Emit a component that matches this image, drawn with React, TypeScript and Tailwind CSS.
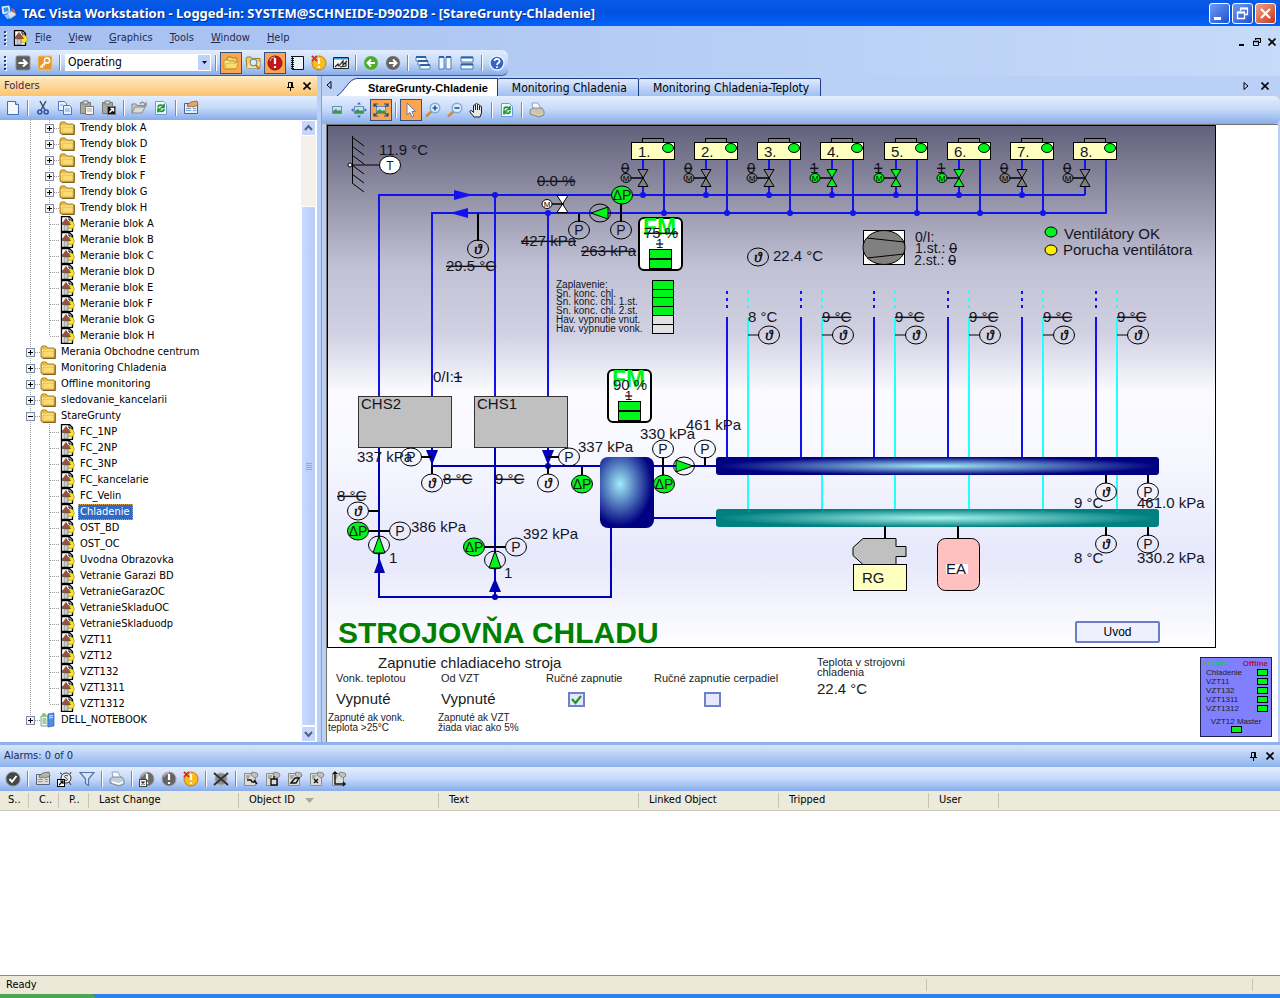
import type { ReactNode } from "react"

const ui = "font-['DejaVu_Sans_Condensed','DejaVu_Sans',sans-serif]"
const barBg = "bg-linear-to-b from-[#e3edfd] via-[#c5d9f9] to-[#88acea]"

/* ---------- icons ---------- */

function Icon({ children }: { children: ReactNode }) {
  return (
    <svg width="16" height="16" viewBox="0 0 16 16" fill="none" aria-hidden="true" className="shrink-0">
      {children}
    </svg>
  )
}

const FolderIcon = () => (
  <Icon>
    <path d="M1 4l1-2h4l2 2h6l1 1v8l-1 1H2l-1-1z" fill="#e8bc45" stroke="#a9812a" />
    <path d="M2 5.5h12V12H2z" fill="#fff1a0" />
    <path d="M3 7h11v6H3z" fill="#fbdc74" stroke="#d6a73a" strokeWidth=".7" />
    <path d="M15.3 5v9.5H3" stroke="#7d5d1e" />
  </Icon>
)

const GraphicIcon = () => (
  <Icon>
    <path d="M2.5 .5h8l3 3v12h-11z" fill="#fff" stroke="#000" strokeWidth="1.3" />
    <path d="M10 1v3h3.5" stroke="#000" />
    <circle cx="11.5" cy="9" r="3.8" fill="#f5e52a" stroke="#a89a10" strokeWidth=".7" />
    <path d="M7 2.5l4.5 6h-9z" fill="#a2503f" stroke="#5c2419" strokeWidth=".6" />
    <path d="M5 9h4v5.500H5z" fill="#c8cdd2" stroke="#5b6067" strokeWidth=".6" />
  </Icon>
)

const ComputerIcon = () => (
  <Icon>
    <path d="M1 4h7v10H1z" fill="#eef3ee" stroke="#8a9aa8" />
    <path d="M8 2l6-1v13l-6 1z" fill="#4d8fe0" stroke="#2b5ea8" strokeWidth=".7" />
    <path d="M2.5 7h4M2.5 9h4M2.5 11h4" stroke="#58a858" />
    <path d="M9 4l4-.6M9 6l4-.6" stroke="#cfe4ff" />
    <circle cx="4" cy="3" r="2" fill="#7bd048" />
  </Icon>
)

const AppIcon = () => (
  <Icon>
    <path d="M1 2l7-1 1 6-7 2z" fill="#bfe2ff" stroke="#e8f4ff" />
    <path d="M2.500 3l4.500-.7.700 3.800-4.500 1z" fill="#3590e8" />
    <path d="M6 8l7-3 2 5-6 4z" fill="#d7e3ee" stroke="#7b93b5" strokeWidth=".7" />
    <path d="M10 3l3 1 1 4-3-1z" fill="#c4604c" />
    <path d="M3 10l4-1 3 4-4 1z" fill="#8cc4f4" />
  </Icon>
)

const GoIcon = () => (
  <Icon>
    <rect x="1" y="1" width="14" height="14" rx="1.5" fill="#5b5e5f" stroke="#8b8e90" />
    <path d="M3.5 8h8M8 4.5L11.8 8 8 11.5" stroke="#fff" strokeWidth="2" />
  </Icon>
)

const KeyIcon = () => (
  <Icon>
    <rect x="1" y="1" width="14" height="14" rx="1.5" fill="#e6962a" stroke="#f6c26d" />
    <circle cx="10" cy="5.5" r="2.6" stroke="#fff" strokeWidth="1.5" />
    <path d="M8 7.5l-5 5M4.5 11l1.7 1.7M6.5 9l1.5 1.5" stroke="#fff" strokeWidth="1.5" />
  </Icon>
)

const FoldersIcon = () => (
  <Icon>
    <path d="M4 3l1-1h3l1 1h5v8H4z" fill="#f7d767" stroke="#a67f1d" />
    <path d="M1 6l1-1h3l1 1h6l1.5 8H1z" fill="#fff0a0" stroke="#b88d25" />
    <path d="M3 8h10l2-1-1.5 6.5H2z" fill="#fbdc6c" stroke="#c09428" strokeWidth=".6" />
  </Icon>
)

const FolderSearchIcon = () => (
  <Icon>
    <path d="M1 4l1-2h4l1 1.5h8V13H2z" fill="#f4cd5b" stroke="#a67f1d" />
    <path d="M2 13l2-6h11l-1 6z" fill="#fde891" />
    <circle cx="8.5" cy="7.5" r="3.3" fill="#d9efff" stroke="#7b8d9c" strokeWidth="1.2" />
    <path d="M11 10l3 4" stroke="#b57b1b" strokeWidth="2" />
  </Icon>
)

function Alert({ fill, ring = "#777", mark = "#fff" }: { fill: string; ring?: string; mark?: string }) {
  return (
    <>
      <circle cx="8" cy="8" r="7" fill={fill} stroke={ring} />
      <path d="M3 6a5.5 5 0 0 1 5-4" stroke="#fff" opacity=".5" strokeWidth="1.3" />
      <path d="M8 3v6M8 11v2" stroke={mark} strokeWidth="2.2" />
    </>
  )
}

const RedAlertIcon = () => (
  <Icon>
    <Alert fill="#c51717" ring="#7f1515" />
  </Icon>
)
const GrayAlertIcon = () => (
  <Icon>
    <Alert fill="#646464" ring="#a0a0a0" />
  </Icon>
)
const OffAlertIcon = () => (
  <Icon>
    <Alert fill="#6a6a6a" ring="#a0a0a0" />
    <rect x=".5" y="8.5" width="7" height="7" fill="#f4f4f4" stroke="#444" />
    <path d="M2.5 10.500l3 3M5.500 10.500l-3 3" stroke="#222" strokeWidth="1.2" />
  </Icon>
)
const YellowAlertIcon = () => (
  <Icon>
    <Alert fill="#f6bd1c" ring="#c77a12" mark="#fff7d8" />
    <path d="M1 1l5 5M6 1L1 6" stroke="#e0301a" strokeWidth="2" />
  </Icon>
)

const NotebookIcon = () => (
  <Icon>
    <path d="M3.5 1.5h11v13h-11z" fill="#eaf2fc" stroke="#111" />
    <path d="M3.5 1v14" stroke="#111" strokeWidth="3" strokeDasharray="1 1" />
  </Icon>
)

const TrendIcon = () => (
  <Icon>
    <path d="M.5 2.5h15v11H.5z" fill="#f4f6ee" stroke="#222" />
    <path d="M1 3h14v1.5H1z" fill="#3a9ae0" />
    <path d="M2 12l3-3 1 2 4-5v4l4-4M7 12l6-1V8" stroke="#222" strokeWidth="1.2" />
  </Icon>
)

function RoundArrow({ fill, back }: { fill: string; back?: boolean }) {
  return (
    <Icon>
      <circle cx="8" cy="8" r="7.3" fill={fill} stroke="#e4ede4" strokeWidth=".5" />
      <path d={back ? "M12 8H5M8 4.5L4.5 8 8 11.5" : "M4 8h7M8 4.5L11.5 8 8 11.5"} stroke="#fff" strokeWidth="1.9" />
    </Icon>
  )
}

const CascadeIcon = () => (
  <Icon>
    <path d="M1 2h10v4H1zM3 6h10v4H3zM5 10h10v4H5z" fill="#f2f8ff" stroke="#2b62a8" strokeWidth=".7" />
    <path d="M1 2h10M3 6h10M5 10h10" stroke="#2b62a8" strokeWidth="2" />
  </Icon>
)
const TileVIcon = () => (
  <Icon>
    <path d="M2 2h5v12H2zM9 2h5v12H9z" fill="#f2f8ff" stroke="#2b62a8" strokeWidth=".8" />
    <path d="M2 2h5M9 2h5" stroke="#2b62a8" strokeWidth="2" />
  </Icon>
)
const TileHIcon = () => (
  <Icon>
    <path d="M2 2h12v5H2zM2 9h12v5H2z" fill="#f2f8ff" stroke="#2b62a8" strokeWidth=".8" />
    <path d="M2 2.5h12M2 9.5h12" stroke="#2b62a8" strokeWidth="2" />
  </Icon>
)

const HelpIcon = () => (
  <Icon>
    <circle cx="8" cy="8" r="7" fill="#3466c8" stroke="#eef4ff" strokeWidth="1.3" />
    <path d="M5.5 6a2.5 2.3 0 1 1 3.5 2.2c-.9.5-1 .8-1 1.8M8 11.3v1.7" stroke="#fff" strokeWidth="1.7" />
  </Icon>
)

const NewIcon = () => (
  <Icon>
    <path d="M2.5 1.5h8l3 3v10h-11z" fill="#f3f8ff" stroke="#456fb5" />
    <path d="M10.5 1.5v3h3" fill="#cfe0f8" stroke="#456fb5" />
  </Icon>
)
const CutIcon = () => (
  <Icon>
    <path d="M5 1l5 9M11 1L6 10" stroke="#3d4e68" strokeWidth="1.5" />
    <circle cx="4.8" cy="12" r="2" stroke="#2d57a4" strokeWidth="1.6" />
    <circle cx="11.2" cy="12" r="2" stroke="#2d57a4" strokeWidth="1.6" />
  </Icon>
)
const CopyIcon = () => (
  <Icon>
    <path d="M1.5 1.5h6l2 2v7h-8z" fill="#eaf2ff" stroke="#4a77bd" />
    <path d="M6.5 5.5h6l2 2v7h-8z" fill="#eaf2ff" stroke="#4a77bd" />
    <path d="M3 5h3M8 9h5M8 11h5" stroke="#7ea2da" />
  </Icon>
)
const PasteIcon = ({ link }: { link?: boolean }) => (
  <Icon>
    <path d="M1.5 2.5h10v11h-10z" fill="#a9a9a4" stroke="#777" />
    <path d="M4 1h5v3H4z" fill="#ddd" stroke="#777" />
    <path d="M6.5 6.5h8v8h-8z" fill={link ? "#111" : "#f5f5f2"} stroke="#777" />
    {link ? <path d="M8.5 12.5l4-4M9.500 8.5h3v3" stroke="#fff" strokeWidth="1.5" /> : <path d="M8 9h5M8 11h5" stroke="#aaa" />}
  </Icon>
)
const OpenIcon = () => (
  <Icon>
    <path d="M1 13V4h4l1 1.5h5V8" fill="#c9c9c4" stroke="#8b8b86" />
    <path d="M1 13l3-6h10l-3 6z" fill="#dcdcd6" stroke="#8b8b86" />
    <path d="M9 4c2-3 4-2 5 1M15 2v4h-4" stroke="#8b8b86" strokeWidth="1.3" />
  </Icon>
)
const RefreshIcon = () => (
  <Icon>
    <path d="M2.5 1.5h8l3 3v10h-11z" fill="#f0f7ff" stroke="#6f99d2" />
    <path d="M5 7.5c0-3 4-3 5.5-1M11 4v3.500H7.5" stroke="#1c9a2c" strokeWidth="1.7" />
    <path d="M11 9c0 3-4 3-5.5 1M5 12.500V9h3.5" stroke="#1c9a2c" strokeWidth="1.7" />
  </Icon>
)
const PropsIcon = ({ gray }: { gray?: boolean }) => (
  <Icon>
    <path d="M1.5 3.5h13v10h-13z" fill={gray ? "#deded8" : "#e3edfb"} stroke="#54647c" />
    <path d="M3 8.500h5M3 10.500h5M10 8.500h3M10 10.500h3" stroke={gray ? "#999" : "#7fa0d4"} />
    <path d="M4 5l4-3 6-1 1 4-5 2-2-1-3 1z" fill={gray ? "#b9b4aa" : "#e2a86a"} stroke={gray ? "#66635d" : "#8f5b2b"} strokeWidth=".8" />
  </Icon>
)

const Picture = () => (
  <>
    <rect x="3.5" y="4.5" width="9" height="7" fill="#bfe0f5" stroke="#6d8db4" />
    <path d="M4 11V9l3-2 2 2 2-1 1 1v2z" fill="#3f9445" />
  </>
)
const PictureIcon = () => (
  <Icon>
    <Picture />
  </Icon>
)
const PictureFitIcon = () => (
  <Icon>
    <Picture />
    <path d="M8 0l2 2.5H6zM8 16l2-2.5H6zM0 8l2.5-2v4zM16 8l-2.5-2v4z" fill="#2f6fc0" />
  </Icon>
)
const PictureFullIcon = () => (
  <Icon>
    <Picture />
    <path d="M1 5V2h4M11 2h4v3M15 11v3h-4M5 14H1v-3M1 2l3 3M15 2l-3 3M15 14l-3-3M1 14l3-3" stroke="#1d4f8c" strokeWidth="1.2" />
  </Icon>
)
const PointerIcon = () => (
  <Icon>
    <path d="M4 1l8.5 8.5H9l2 4.5-2 1-2-4.5L4 13z" fill="#f4f8ff" stroke="#6c80a0" />
  </Icon>
)
const ZoomIcon = ({ plus }: { plus?: boolean }) => (
  <Icon>
    <path d="M6.5 9.500L1 14.5" stroke="#cf8b3a" strokeWidth="2.5" />
    <circle cx="10" cy="6" r="4.8" fill="#d7edff" stroke="#8aa9cf" strokeWidth="1.4" />
    <path d={plus ? "M7.5 6h5M10 3.5v5" : "M7.5 6h5"} stroke="#1d5fae" strokeWidth="1.7" />
  </Icon>
)
const HandIcon = () => (
  <Icon>
    <path d="M5 15l-4-5c-.5-1.5 1-2 2-1l1.5 1.5V4c0-1.500 2-1.500 2 0V2.500c0-1.500 2-1.500 2 0v1c0-1.500 2-1.500 2 0v1.500c0-1.500 2-1.500 2 0V11l-1.5 4z" fill="#e8e8e8" stroke="#222" />
    <path d="M6.5 4v4M8.5 3.5V8M10.5 4v4" stroke="#222" />
  </Icon>
)
const PrinterIcon = ({ gray }: { gray?: boolean }) => (
  <Icon>
    <path d="M4 7L3 1h6l3 6z" fill="#f6fbff" stroke="#89a5c6" />
    <path d="M1 8l3-2h9l2 3v4l-5 2-9-3z" fill={gray ? "#c2cedd" : "#c6c4bd"} stroke="#75777b" strokeWidth=".8" />
    <path d="M3 11l7 2 4-2" stroke={gray ? "#fff" : "#e0d18c"} strokeWidth="1.5" />
  </Icon>
)
const AckIcon = () => (
  <Icon>
    <circle cx="8" cy="8" r="7" fill="#454545" stroke="#888" />
    <path d="M4.5 8l2.5 2.8L11.5 5" stroke="#fff" strokeWidth="2" />
  </Icon>
)
const FindIcon = () => (
  <Icon>
    <circle cx="9" cy="7" r="5" fill="#ececec" stroke="#333" />
    <path d="M11 5c-3-1.5-5 .5-2 2s1 3.3-2 2M3 2l2 1M14 1l-1 2M12 11l2 3" stroke="#333" />
    <rect x=".5" y="8.5" width="7" height="7" fill="#fff" stroke="#000" />
    <path d="M2 14l4-4M3 10h3v3" stroke="#000" strokeWidth="1.2" />
  </Icon>
)
const FilterIcon = () => (
  <Icon>
    <path d="M1 1.5h14L9.5 8v6.500l-3-2V8z" fill="#d5e6fb" stroke="#54749f" strokeWidth="1.2" />
  </Icon>
)
const CrossedIcon = () => (
  <Icon>
    <circle cx="8" cy="8" r="6" fill="#8c8c8c" stroke="#aaa" />
    <path d="M1 2l14 12M15 2L1 14" stroke="#333" strokeWidth="2" />
  </Icon>
)
const SheetIcon = ({ mark }: { mark: string }) => (
  <Icon>
    <path d="M1.5 2.5h11v12h-11z" fill="#dcdcd8" stroke="#8a8a86" />
    <path d="M9 1l5 1 1 3-3 2-4-3z" fill="#c4c2ba" stroke="#77756f" strokeWidth=".8" />
    <path d="M3 5h4M3 7h3" stroke="#777" />
    <path d={mark} stroke="#111" strokeWidth="1.4" />
  </Icon>
)

const PinIcon = () => (
  <svg width="8" height="9" viewBox="0 0 8 9" fill="none" stroke="#000" aria-hidden="true">
    <path d="M1.5 .5h4v5h-4zM4.5 .5v5M0 5.5h7M3.5 6v3" />
  </svg>
)
const CloseIcon = () => (
  <svg width="8" height="8" viewBox="0 0 8 8" fill="none" stroke="#000" strokeWidth="1.6" aria-hidden="true">
    <path d="M.5 .5l7 7M7.5 .5l-7 7" />
  </svg>
)

/* ---------- toolbars ---------- */

function Tool({ label, active, children }: { label: string; active?: boolean; children: ReactNode }) {
  return (
    <button
      type="button"
      aria-label={label}
      className={`flex h-[22px] w-[22px] shrink-0 items-center justify-center ${active ? "border border-[#3a4f86] bg-[#fba550]" : ""}`}
    >
      {children}
    </button>
  )
}

function Sep() {
  return (
    <span className="flex h-4 w-2 shrink-0 justify-center">
      <span className="w-px bg-[#6a8ccb]" />
      <span className="w-px bg-white" />
    </span>
  )
}

function Grip() {
  return (
    <svg width="4" height="16" viewBox="0 0 4 16" className="mx-1 shrink-0" aria-hidden="true">
      {[1, 5, 9, 13].map((y) => (
        <g key={y}>
          <rect x="1" y={y + 1} width="2" height="2" fill="#fff" />
          <rect x="0" y={y} width="2" height="2" fill="#27417d" />
        </g>
      ))}
    </svg>
  )
}

function PanelButtons() {
  return (
    <div className="flex items-center gap-2">
      <button type="button" aria-label="Auto hide">
        <PinIcon />
      </button>
      <button type="button" aria-label="Close panel">
        <CloseIcon />
      </button>
    </div>
  )
}

function TitleBar() {
  return (
    <header className="flex h-[26px] items-center justify-between bg-linear-to-b from-[#0a5be8] via-[#0053e1] to-[#0263ff] pr-1 pl-px">
      <div className="flex items-center gap-[5px]">
        <AppIcon />
        <h1 className="font-['Noto_Sans',sans-serif] text-[13px] font-bold whitespace-nowrap text-white [text-shadow:1px_1px_#0a2a80]">
          TAC Vista Workstation - Logged-in: SYSTEM@SCHNEIDE-D902DB - [StareGrunty-Chladenie]
        </h1>
      </div>
      <div className="flex gap-[2px]">
        <button type="button" aria-label="Minimize" className="h-[21px] w-[21px] rounded-[3px] border border-white bg-linear-to-br from-[#6f9bf5] to-[#1f4fd0]">
          <svg viewBox="0 0 19 19" aria-hidden="true"><path d="M4 13h7v3H4z" fill="#fff" /></svg>
        </button>
        <button type="button" aria-label="Restore" className="h-[21px] w-[21px] rounded-[3px] border border-white bg-linear-to-br from-[#6f9bf5] to-[#1f4fd0]">
          <svg viewBox="0 0 19 19" fill="none" stroke="#fff" aria-hidden="true">
            <path d="M7.5 7V4.5h7v6H12" strokeWidth="1.3" />
            <path d="M7 4.5h8M4 8.5h8" strokeWidth="2" />
            <path d="M4.5 8.5h7v6h-7z" strokeWidth="1.3" />
          </svg>
        </button>
        <button type="button" aria-label="Close" className="h-[21px] w-[21px] rounded-[3px] border border-white bg-linear-to-br from-[#f0a088] to-[#c83210]">
          <svg viewBox="0 0 19 19" stroke="#fff" strokeWidth="2.2" aria-hidden="true"><path d="M5 5l9 9M14 5l-9 9" /></svg>
        </button>
      </div>
    </header>
  )
}

const menus = ["File", "View", "Graphics", "Tools", "Window", "Help"]

function MenuBar() {
  return (
    <nav className="flex h-6 items-center justify-between pr-1">
      <div className="flex items-center">
        <Grip />
        <GraphicIcon />
        <div className="ml-[7px] flex gap-[17px]">
          {menus.map((m) => (
            <button key={m} type="button" className="text-[#1c2a52]">
              <span className="underline">{m[0]}</span>
              {m.slice(1)}
            </button>
          ))}
        </div>
      </div>
      <div className="flex items-center gap-[7px] pt-2">
        <button type="button" aria-label="Minimize document">
          <svg width="8" height="8" viewBox="0 0 8 8" aria-hidden="true"><path d="M1 6h5v2H1z" /></svg>
        </button>
        <button type="button" aria-label="Restore document">
          <svg width="8" height="8" viewBox="0 0 8 8" fill="none" stroke="#000" aria-hidden="true">
            <path d="M2.5 2V.5h5v4H6M.5 3.5h5v4h-5z" />
            <path d="M2 .5h6M0 3.5h6" strokeWidth="1.5" />
          </svg>
        </button>
        <button type="button" aria-label="Close document">
          <CloseIcon />
        </button>
      </div>
    </nav>
  )
}

function MainToolbar() {
  return (
    <div className={`flex h-[26px] w-fit items-center rounded-r-md border-b border-[#3d5f9f] ${barBg}`}>
      <Grip />
      <Tool label="Log off"><GoIcon /></Tool>
      <Tool label="Access"><KeyIcon /></Tool>
      <Sep />
      <span className="relative mx-px flex">
        <select aria-label="Mode" className="h-[17px] w-[146px] appearance-none bg-white pl-[3px] text-[12px] leading-[17px]" defaultValue="Operating">
          <option>Operating</option>
        </select>
        <span className="pointer-events-none absolute top-px right-px flex h-[15px] w-3 items-center justify-center bg-[#bcd2f8]">
          <svg width="5" height="3" viewBox="0 0 5 3" aria-hidden="true"><path d="M0 0h5L2.5 3z" /></svg>
        </span>
      </span>
      <Sep />
      <Tool label="Folders" active><FoldersIcon /></Tool>
      <Tool label="Search folders"><FolderSearchIcon /></Tool>
      <Tool label="Alarms" active><RedAlertIcon /></Tool>
      <Tool label="Log"><NotebookIcon /></Tool>
      <Tool label="Disabled alarms"><YellowAlertIcon /></Tool>
      <Tool label="Trends"><TrendIcon /></Tool>
      <Sep />
      <Tool label="Back"><RoundArrow fill="#4cae30" back /></Tool>
      <Tool label="Forward"><RoundArrow fill="#666" /></Tool>
      <Sep />
      <Tool label="Cascade"><CascadeIcon /></Tool>
      <Tool label="Tile vertically"><TileVIcon /></Tool>
      <Tool label="Tile horizontally"><TileHIcon /></Tool>
      <Sep />
      <Tool label="Help"><HelpIcon /></Tool>
    </div>
  )
}

/* ---------- folder tree ---------- */

type Node = { name: string; level: 1 | 2; kind: "folder" | "page" | "host"; box?: "+" | "-"; last?: boolean }

const page = (name: string): Node => ({ name, level: 2, kind: "page" })

const nodes: Node[] = [
  ...["A", "D", "E", "F", "G", "H"].map((s): Node => ({ name: `Trendy blok ${s}`, level: 2, kind: "folder", box: "+" })),
  ...["A", "B", "C", "D", "E", "F", "G"].map((s) => page(`Meranie blok ${s}`)),
  { ...page("Meranie blok H"), last: true },
  { name: "Merania Obchodne centrum", level: 1, kind: "folder", box: "+" },
  { name: "Monitoring Chladenia", level: 1, kind: "folder", box: "+" },
  { name: "Offline monitoring", level: 1, kind: "folder", box: "+" },
  { name: "sledovanie_kancelarii", level: 1, kind: "folder", box: "+" },
  { name: "StareGrunty", level: 1, kind: "folder", box: "-" },
  ...["FC_1NP", "FC_2NP", "FC_3NP", "FC_kancelarie", "FC_Velin", "Chladenie", "OST_BD", "OST_OC", "Uvodna Obrazovka"].map(page),
  ...["Vetranie Garazi BD", "VetranieGarazOC", "VetranieSkladuOC", "VetranieSkladuodp", "VZT11", "VZT12", "VZT132", "VZT1311"].map(page),
  { ...page("VZT1312"), last: true },
  { name: "DELL_NOTEBOOK", level: 1, kind: "host", box: "+", last: true },
]

function Connector({ box, branch, last }: { box?: "+" | "-"; branch?: boolean; last?: boolean }) {
  return (
    <svg width="20" height="16" viewBox="0 0 20 16" className="-mr-px shrink-0" shapeRendering="crispEdges" aria-hidden="true">
      <path d={last ? "M9.5 0v8" : "M9.5 0v16"} stroke="#9a9a9a" strokeDasharray="1 1" />
      {branch && <path d="M10 8.5h10" stroke="#9a9a9a" strokeDasharray="1 1" />}
      {box && (
        <>
          <rect x="5.5" y="4.5" width="8" height="8" fill="#f4f3ee" stroke="#7b8ba5" />
          <path d={box === "+" ? "M7 8.5h5M9.5 6v5" : "M7 8.5h5"} stroke="#000" />
        </>
      )}
    </svg>
  )
}

function TreeRow({ node }: { node: Node }) {
  const selected = node.name === "Chladenie"
  return (
    <li className="flex h-4 items-center pl-[21px]">
      {node.level === 2 && <Connector />}
      <Connector box={node.box} branch last={node.last} />
      {node.kind === "folder" && <FolderIcon />}
      {node.kind === "page" && <GraphicIcon />}
      {node.kind === "host" && <ComputerIcon />}
      <button
        type="button"
        className={`ml-[3px] h-4 pr-[3px] pl-[2px] leading-4 whitespace-nowrap ${selected ? "bg-[#316ac5] text-white outline-1 -outline-offset-1 outline-dotted outline-[#e0a050]" : ""}`}
      >
        {node.name}
      </button>
    </li>
  )
}

function ScrollButton({ label, d }: { label: string; d: string }) {
  return (
    <button type="button" aria-label={label} className="h-4 w-[15px] rounded-[2px] border border-white bg-[#c6d5fb]">
      <svg viewBox="0 0 13 14" fill="none" stroke="#4d6185" strokeWidth="2" aria-hidden="true"><path d={d} /></svg>
    </button>
  )
}

function FoldersPanel() {
  return (
    <aside className="flex w-[317px] shrink-0 flex-col">
      <div className="flex h-5 items-center justify-between bg-linear-to-b from-[#ffebc4] to-[#fdc36c] pr-[6px] pl-1 text-[#3a2a4a]">
        <h2>Folders</h2>
        <PanelButtons />
      </div>
      <div className={`flex h-6 items-center pl-[2px] ${barBg}`}>
        <Tool label="New"><NewIcon /></Tool>
        <Sep />
        <Tool label="Cut"><CutIcon /></Tool>
        <Tool label="Copy"><CopyIcon /></Tool>
        <Tool label="Paste"><PasteIcon /></Tool>
        <Tool label="Paste shortcut"><PasteIcon link /></Tool>
        <Sep />
        <Tool label="Open"><OpenIcon /></Tool>
        <Tool label="Refresh"><RefreshIcon /></Tool>
        <Sep />
        <Tool label="Properties"><PropsIcon /></Tool>
      </div>
      <div className="flex flex-1 bg-white">
        <ul className="flex-1 pb-[14px]">
          {nodes.map((n) => (
            <TreeRow key={n.name} node={n} />
          ))}
        </ul>
        <div className="mr-px flex w-[15px] flex-col bg-[#f3f1ea]">
          <ScrollButton label="Scroll up" d="M3 9l3.5-4L10 9" />
          <div className="h-[70px]" />
          <div className="flex w-[15px] flex-1 flex-col items-center justify-center gap-px rounded-[2px] border border-white bg-linear-to-r from-[#cad9fd] to-[#b7cbf8]">
            {[0, 1, 2, 3].map((i) => (
              <span key={i} className="h-px w-[6px] bg-[#8ba7e6]" />
            ))}
          </div>
          <ScrollButton label="Scroll down" d="M3 5l3.5 4L10 5" />
        </div>
      </div>
    </aside>
  )
}

/* ---------- process diagram ---------- */

const BLUE = "#1212ee"
const NAVY = "#0000b8"
const CYAN = "#22ffff"
const GREEN = "#00f51a"

type TextProps = { x: number; y: number; children: ReactNode; struck?: boolean; size?: number }

function T({ x, y, children, struck, size = 15 }: TextProps) {
  return (
    <text x={x} y={y} fontSize={size} fill="#14141e" textDecoration={struck ? "line-through" : undefined}>
      {children}
    </text>
  )
}

function Gauge({ x, y, kind, fill = "none" }: { x: number; y: number; kind: "P" | "T" | "dP" | "th"; fill?: string }) {
  return (
    <g>
      <ellipse cx={x} cy={y} rx="10.5" ry="9" fill={kind === "dP" ? GREEN : fill} stroke="#000" />
      {kind === "th" ? (
        <text x={x} y={y + 5} fontSize="15" textAnchor="middle" fontStyle="italic" fontFamily="'Liberation Serif', 'DejaVu Serif', serif" stroke="#000" strokeWidth=".4">
          ϑ
        </text>
      ) : (
        <text x={x} y={y + 5} fontSize={kind === "T" ? 12 : 14} textAnchor="middle" fill="#14141e">
          {kind === "dP" ? "ΔP" : kind}
        </text>
      )}
    </g>
  )
}

function Pump({ x, y, turn }: { x: number; y: number; turn: number }) {
  return (
    <g>
      <ellipse cx={x} cy={y} rx="10.5" ry="9" fill="none" stroke="#000" />
      <path d="M-8 -6L9 0L-8 6z" transform={`translate(${x} ${y}) rotate(${turn})`} fill={GREEN} stroke="#000" />
    </g>
  )
}

function Motor({ x, y, fill }: { x: number; y: number; fill: string }) {
  return (
    <g>
      <path d={`M${x + 5} ${y}h12`} stroke="#000" strokeWidth="1.5" />
      <ellipse cx={x} cy={y} rx="5" ry="4.5" fill={fill} stroke="#000" />
      <text x={x} y={y + 3} fontSize="8" textAnchor="middle">M</text>
    </g>
  )
}

function Fan({ i }: { i: number }) {
  const x = 632 + Math.round(i * 63.14)
  const on = i >= 3 && i <= 5
  const fill = on ? GREEN : "#808080"
  return (
    <g>
      <path d={`M${x + 11} 160V195M${x + 32} 160V213`} stroke={BLUE} strokeWidth="2" />
      <rect x={x + 10.5} y="138.5" width="21" height="5" fill="#808080" stroke="#000" />
      <rect x={x - 0.5} y="142.5" width="43" height="17" fill="#ffffc0" stroke="#000" />
      <ellipse cx={x + 36} cy="148" rx="5.5" ry="4.5" fill={GREEN} stroke="#000" />
      <T x={x + 6} y={157}>{i + 1}.</T>
      <T x={x - 11} y={173} struck>{on ? 1 : 0}</T>
      <Motor x={x - 6} y={178} fill={fill} />
      <path d={`M${x + 6} 169.5h10l-10 17h10z`} fill={fill} stroke="#000" />
      {i < 7 && (
        <>
          <circle cx={x + 11} cy="195" r="3" fill={BLUE} />
          <circle cx={x + 32} cy="213" r="3" fill={BLUE} />
        </>
      )}
    </g>
  )
}

function Converter({ x, y, value, struck }: { x: number; y: number; value: string; struck?: boolean }) {
  return (
    <g>
      <rect x={x} y={y} width="43" height="52" rx="5" fill="#fff" stroke="#000" strokeWidth="2" />
      <text x={x + 4} y={y + 17} fontSize="23" fontWeight="bold" fill={GREEN}>FM</text>
      <T x={x + 5} y={y + 20} struck={struck}>{value}</T>
      <T x={x + 17} y={y + 30} size={13} struck>1</T>
      <rect x={x + 10.5} y={y + 31.5} width="22" height="9" fill={GREEN} stroke="#000" />
      <rect x={x + 10.5} y={y + 41.5} width="22" height="9" fill={GREEN} stroke="#000" />
    </g>
  )
}

function Branch({ i }: { i: number }) {
  const x = 727 + Math.round(i * 73.7)
  return (
    <g>
      <path d={`M${x} 317V458`} stroke={BLUE} strokeWidth="2" />
      <path d={`M${x} 291V312`} stroke={BLUE} strokeWidth="2" strokeDasharray="3 4" />
      <path d={`M${x + 21} 317V509`} stroke={CYAN} strokeWidth="2" />
      <path d={`M${x + 21} 291V312`} stroke={CYAN} strokeWidth="2" strokeDasharray="3 4" />
      <path d={`M${x + 21} 335h11`} stroke="#000" />
      <Gauge x={x + 42} y={335} kind="th" />
      <T x={x + 21} y={322} struck={i > 0}>{i ? "9 °C" : "8 °C"}</T>
    </g>
  )
}

const faults = ["Zaplavenie:", "Sn. konc. chl.", "Sn. konc. chl. 1.st.", "Sn. konc. chl. 2.st.", "Hav. vypnutie vnut.", "Hav. vypnutie vonk."]

function Diagram() {
  return (
    <svg width="889" height="523" viewBox="327 125 889 523" fontFamily="'Liberation Sans', Arial, sans-serif" className="block overflow-visible" role="img" aria-label="Strojovňa chladu">
      <defs>
        <linearGradient id="sky" x1="0" y1="0" x2="0" y2="1">
          <stop offset="0" stopColor="#62617c" />
          <stop offset=".15" stopColor="#9796aa" />
          <stop offset=".27" stopColor="#c1c1d5" />
          <stop offset=".4" stopColor="#d1d1e3" />
          <stop offset=".51" stopColor="#fafaff" />
          <stop offset=".62" stopColor="#f8f8ff" />
          <stop offset=".83" stopColor="#e6e8fb" />
          <stop offset="1" stopColor="#fff" />
        </linearGradient>
        <radialGradient id="tank" cx=".37" cy=".38" r=".6">
          <stop offset="0" stopColor="#a0ecf8" />
          <stop offset="1" stopColor="#000080" />
        </radialGradient>
        <radialGradient id="supply">
          <stop offset="0" stopColor="#a4ecf8" />
          <stop offset="1" stopColor="#000080" />
        </radialGradient>
        <radialGradient id="return">
          <stop offset="0" stopColor="#a8f4ee" />
          <stop offset="1" stopColor="#008080" />
        </radialGradient>
      </defs>
      <rect x="327.5" y="125.5" width="888" height="522" fill="url(#sky)" stroke="#000" />

      {/* outdoor sensor */}
      <path d="M352.5 136v47M352 137l12 9M352 146l12 9M352 155l12 9M352 165l12 9M352 174l12 9M352 183l12 9M352 165h28" stroke="#000" fill="none" />
      <circle cx="350" cy="165" r="2" fill="#fff" stroke="#000" />
      <Gauge x={390} y={165} kind="T" fill="#fff" />
      <T x={379} y={155}>11.9 °C</T>

      {/* upper circuit */}
      <g fill="none" stroke={BLUE} strokeWidth="2">
        <path d="M379 396V195H1085M432 396V213H1106V160M495 195V396M548 213V396" />
      </g>
      <path d="M454 190l19 5-19 5zM468 208l-18 5 18 5z" fill={BLUE} />
      <circle cx="495" cy="195" r="3" fill={BLUE} />
      <circle cx="548" cy="213" r="3" fill={BLUE} />
      {[0, 1, 2, 3, 4, 5, 6, 7].map((i) => (
        <Fan key={i} i={i} />
      ))}
      <T x={537} y={186} struck>0.0 %</T>
      <Motor x={547} y={204} fill="#fff" />
      <path d="M557 195.5h11l-11 17h11z" fill="#fff" stroke="#000" />
      <path d="M478 214v27M579 214v8M621 204v18" stroke="#000" strokeWidth="2" />
      <Gauge x={478} y={249} kind="th" />
      <T x={446} y={271} struck>29.5 °C</T>
      <Gauge x={579} y={230} kind="P" />
      <T x={521} y={246} struck>427 kPa</T>
      <Pump x={600} y={213} turn={180} />
      <Gauge x={622} y={195} kind="dP" />
      <Gauge x={621} y={230} kind="P" />
      <T x={581} y={256} struck>263 kPa</T>
      <Converter x={639} y={218} value="75 %" struck />

      {/* fault lamps */}
      {faults.map((f, i) => (
        <g key={f}>
          <T x={556} y={288 + Math.round(i * 8.7)} size={10}>{f}</T>
          <rect x="652.5" y={280.5 + Math.round(i * 8.7)} width="21" height="9" fill={i < 4 ? GREEN : "#e2e2e2"} stroke="#000" />
        </g>
      ))}

      <Gauge x={758} y={257} kind="th" />
      <T x={773} y={261}>22.4 °C</T>

      {/* compressor */}
      <rect x="863.5" y="230.5" width="41" height="34" fill="#fff" stroke="#000" />
      <ellipse cx="884" cy="247.5" rx="21" ry="17" fill="#808080" stroke="#000" />
      <path d="M867 238l37 4M867 258l37-4" stroke="#000" />
      <T x={915} y={242} size={14}>0/I:</T>
      <T x={915} y={253} size={14}>1.st.: <tspan textDecoration="line-through">0</tspan></T>
      <T x={914} y={265} size={14}>2.st.: <tspan textDecoration="line-through">0</tspan></T>

      <ellipse cx="1051" cy="232" rx="6" ry="5" fill={GREEN} stroke="#000" />
      <ellipse cx="1051" cy="250" rx="6" ry="5" fill="#ffee00" stroke="#000" />
      <T x={1064} y={239}>Ventilátory OK</T>
      <T x={1063} y={255}>Porucha ventilátora</T>

      {[0, 1, 2, 3, 4, 5].map((i) => (
        <Branch key={i} i={i} />
      ))}

      {/* chillers */}
      <rect x="358.5" y="396.5" width="93" height="51" fill="#c0c0c0" stroke="#333" />
      <rect x="474.5" y="396.5" width="93" height="51" fill="#c0c0c0" stroke="#333" />
      <T x={361} y={409}>CHS2</T>
      <T x={477} y={409}>CHS1</T>
      <T x={433} y={382}>0/I:<tspan textDecoration="line-through">1</tspan></T>
      <Converter x={608} y={370} value="90 %" />

      {/* lower circuit */}
      <path d="M379 448V597H611V527M495 448V597M432 448V466H600M548 448V466M654 466H717M654 518H717" fill="none" stroke={NAVY} strokeWidth="2" />
      <path d="M426 450h12l-6 15zM542 450h12l-6 15zM374 573h11l-5.5-15zM489 592h12l-6-14z" fill={NAVY} />
      <circle cx="548" cy="466" r="3" fill={NAVY} />
      <circle cx="495" cy="597" r="3" fill={NAVY} />
      <path d="M421 457h11M432 466v8M548 466v8M548 457h11M582 467v9M369 511h10M369 531h20M485 547h20M663 457v19M705 457v9" stroke="#000" strokeWidth="2" />
      <Gauge x={411} y={457} kind="P" />
      <T x={357} y={462}>337 kPa</T>
      <Gauge x={432} y={483} kind="th" />
      <T x={443} y={484} struck>8 °C</T>
      <T x={495} y={484} struck>9 °C</T>
      <Gauge x={548} y={483} kind="th" />
      <Gauge x={569} y={457} kind="P" />
      <T x={578} y={452}>337 kPa</T>
      <Gauge x={582} y={484} kind="dP" />
      <T x={337} y={501} struck>8 °C</T>
      <Gauge x={358} y={511} kind="th" />
      <Gauge x={358} y={531} kind="dP" />
      <Gauge x={400} y={531} kind="P" />
      <T x={411} y={532}>386 kPa</T>
      <Pump x={379} y={545} turn={270} />
      <T x={389} y={563}>1</T>
      <Gauge x={474} y={547} kind="dP" />
      <Gauge x={516} y={547} kind="P" />
      <T x={523} y={539}>392 kPa</T>
      <Pump x={495} y={560} turn={270} />
      <T x={504} y={578}>1</T>

      <rect x="600" y="457" width="54" height="71" rx="8" fill="url(#tank)" />
      <Gauge x={663} y={449} kind="P" />
      <T x={640} y={439}>330 kPa</T>
      <Gauge x={664} y={484} kind="dP" />
      <Pump x={684} y={466} turn={0} />
      <Gauge x={705} y={449} kind="P" />
      <T x={686} y={430}>461 kPa</T>

      {/* headers */}
      <rect x="716" y="457" width="443" height="18" rx="3" fill="url(#supply)" />
      <rect x="716" y="509" width="443" height="18" rx="3" fill="url(#return)" />
      <path d="M1106 475v8M1148 475v8M1106 527v9M1148 527v9M885 526v12M958 526v12" stroke="#000" strokeWidth="2" />
      <Gauge x={1106} y={492} kind="th" />
      <Gauge x={1148} y={492} kind="P" />
      <T x={1074} y={508}>9 °C</T>
      <T x={1137} y={508}>461.0 kPa</T>
      <Gauge x={1106} y={544} kind="th" />
      <Gauge x={1148} y={544} kind="P" />
      <T x={1074} y={563}>8 °C</T>
      <T x={1137} y={563}>330.2 kPa</T>

      <path d="M863 538.5h33v8h10v10h-10v8h-33l-10-9v-8z" fill="#c0c0c0" stroke="#000" />
      <rect x="853.5" y="564.5" width="53" height="26" fill="#ffffc0" stroke="#000" />
      <T x={862} y={583}>RG</T>
      <rect x="937.5" y="538.5" width="42" height="52" rx="8" fill="#ffc0c0" stroke="#000" />
      <rect x="946" y="564" width="22" height="10" fill="#fff" />
      <T x={946} y={574}>EA</T>

      <text x="338" y="643" fontSize="30" fontWeight="bold" fill="#008000">STROJOVŇA CHLADU</text>
    </svg>
  )
}

/* ---------- document pane ---------- */

function Tick({ id, checked }: { id: string; checked?: boolean }) {
  return (
    <span className="relative flex">
      <input id={id} type="checkbox" defaultChecked={checked} className="peer h-[15px] w-[17px] appearance-none border-2 border-[#6f80cf] bg-[#e6e9fc]" />
      <svg width="17" height="15" viewBox="0 0 17 15" fill="none" stroke="#279127" strokeWidth="2.2" className="pointer-events-none absolute inset-0 hidden peer-checked:block" aria-hidden="true">
        <path d="M4 7l3.5 4L13 4" />
      </svg>
    </span>
  )
}

const Lamp = () => <span className="h-[7px] w-[11px] border border-black bg-[#00f51a]" />

function DocumentFooter() {
  return (
    <div className="flex items-start pt-[9px] pr-[6px] pl-px font-['Liberation_Sans',Arial,sans-serif] text-[#1c1c1c]">
      <div>
        <h3 className="pl-[50px] text-[15px] leading-3">Zapnutie chladiaceho stroja</h3>
        <div className="flex text-[11px]">
          <div className="w-[110px]">
            <p className="pt-[3px] pl-2 leading-3">Vonk. teplotou</p>
            <p className="pt-[7px] pl-2 text-[15px] leading-4">Vypnuté</p>
            <p className="pt-[6px] text-[10px] leading-[10px]">Zapnuté ak vonk.<br />teplota &gt;25°C</p>
          </div>
          <div className="w-[108px]">
            <p className="pt-[3px] pl-[3px] leading-3">Od VZT</p>
            <p className="pt-[7px] pl-[3px] text-[15px] leading-4">Vypnuté</p>
            <p className="pt-[6px] text-[10px] leading-[10px]">Zapnuté ak VZT<br />žiada viac ako 5%</p>
          </div>
          <div className="flex w-[108px] flex-col gap-2 pt-[3px]">
            <label htmlFor="manual" className="leading-3">Ručné zapnutie</label>
            <div className="pl-[22px]"><Tick id="manual" checked /></div>
          </div>
          <div className="flex w-[163px] flex-col gap-2 pt-[3px]">
            <label htmlFor="pumps" className="leading-3">Ručné zapnutie cerpadiel</label>
            <div className="pl-[50px]"><Tick id="pumps" /></div>
          </div>
        </div>
      </div>
      <div className="text-[11px] leading-[10px]">
        <p>Teplota v strojovni<br />chladenia</p>
        <p className="pt-1 text-[15px] leading-4">22.4 °C</p>
      </div>
      <div className="ml-auto w-[72px] border border-[#202050] bg-[#8080ff] px-[3px] pt-px pb-[3px] text-[8px] leading-[9px]">
        <div className="flex justify-between font-bold">
          <span className="text-[#20c070]">Online</span>
          <span className="text-[#b01040]">Offline</span>
        </div>
        {["Chladenie", "VZT11", "VZT132", "VZT1311", "VZT1312"].map((n) => (
          <div key={n} className="flex items-center justify-between pl-[2px]">
            <span>{n}</span>
            <Lamp />
          </div>
        ))}
        <div className="flex flex-col items-center pt-1">
          <span className="whitespace-nowrap">VZT12 Master</span>
          <Lamp />
        </div>
      </div>
    </div>
  )
}

const tabBg = "border-t border-r border-[#1f3f84] bg-linear-to-b from-[#dfeafd] to-[#9fbff2]"

function DocumentPane() {
  return (
    <main className="flex min-w-0 flex-1 flex-col border-l border-[#7fa0da]">
      <div className="flex h-5 items-end justify-between pr-[11px] pl-1">
        <div className="flex items-end text-[12px] whitespace-nowrap">
          <button type="button" aria-label="Previous tab" className="self-center pb-1">
            <svg width="6" height="8" viewBox="0 0 6 8" fill="none" stroke="#000" aria-hidden="true"><path d="M5 .5v7L1 4z" /></svg>
          </button>
          <div className="ml-[5px] flex h-[18px]" role="tablist">
            <svg width="20" height="18" viewBox="0 0 20 18" aria-hidden="true">
              <path d="M0 18C7 14 12 1 20 0v18z" fill="#fff" />
              <path d="M0 18C7 14 12 .5 20 .5" fill="none" stroke="#1f3f84" />
            </svg>
            <button role="tab" aria-selected="true" type="button" className="border-t border-r border-[#1f3f84] bg-white pr-[9px] pl-[11px] font-['Liberation_Sans',Arial,sans-serif] text-[11px] leading-4 font-bold">
              StareGrunty-Chladenie
            </button>
            <button role="tab" type="button" className={`${tabBg} rounded-t-[2px] pr-[11px] pl-[14px] leading-4`}>Monitoring Chladenia</button>
            <button role="tab" type="button" className={`${tabBg} rounded-t-[2px] pr-[11px] pl-[14px] leading-4`}>Monitoring Chladenia-Teploty</button>
          </div>
        </div>
        <div className="flex items-center gap-3 self-center">
          <button type="button" aria-label="Next tab">
            <svg width="6" height="8" viewBox="0 0 6 8" fill="none" stroke="#000" aria-hidden="true"><path d="M1 .5v7L5 4z" /></svg>
          </button>
          <button type="button" aria-label="Close tab"><CloseIcon /></button>
        </div>
      </div>
      <div className={`flex h-7 items-center rounded-r-md pl-1 ${barBg}`}>
        <Tool label="Original size"><PictureIcon /></Tool>
        <Tool label="Expand"><PictureFitIcon /></Tool>
        <Tool label="Fit to window" active><PictureFullIcon /></Tool>
        <Sep />
        <Tool label="Select" active><PointerIcon /></Tool>
        <Tool label="Zoom in"><ZoomIcon plus /></Tool>
        <Tool label="Zoom out"><ZoomIcon /></Tool>
        <Tool label="Pan"><HandIcon /></Tool>
        <Sep />
        <Tool label="Refresh"><RefreshIcon /></Tool>
        <Sep />
        <Tool label="Print"><PrinterIcon /></Tool>
      </div>
      <div className="mr-[2px] ml-1 flex-1 overflow-hidden border-t border-l border-[#77756a] bg-white">
        <div className="relative w-fit">
          <Diagram />
          <button type="button" className="absolute top-[496px] left-[748px] h-[22px] w-[85px] rounded-[2px] border-2 border-[#6c7cc8] bg-[#eef0fe] font-['Liberation_Sans',Arial,sans-serif] text-[12px] leading-4">
            Uvod
          </button>
        </div>
        <DocumentFooter />
      </div>
    </main>
  )
}

/* ---------- alarms ---------- */

const columns: [string, string][] = [
  ["S..", "w-[29px]"],
  ["C..", "w-[30px]"],
  ["P..", "w-[30px]"],
  ["Last Change", "w-[150px]"],
  ["Object ID", "w-[200px]"],
  ["Text", "w-[200px]"],
  ["Linked Object", "w-[140px]"],
  ["Tripped", "w-[150px]"],
  ["User", "w-[70px]"],
]

function AlarmsPanel() {
  return (
    <section className="flex flex-1 flex-col bg-white">
      <div className="flex h-[22px] items-center justify-between bg-linear-to-b from-[#d9e6fc] to-[#8fb3ee] pr-[6px] pl-1 text-[#1c2a52]">
        <h2>Alarms: 0 of 0</h2>
        <PanelButtons />
      </div>
      <div className={`flex h-6 items-center pl-[2px] ${barBg}`}>
        <Tool label="Acknowledge"><AckIcon /></Tool>
        <Sep />
        <Tool label="Alarm properties"><PropsIcon gray /></Tool>
        <Tool label="Find source"><FindIcon /></Tool>
        <Tool label="Filter"><FilterIcon /></Tool>
        <Sep />
        <Tool label="Print alarms"><PrinterIcon gray /></Tool>
        <Sep />
        <Tool label="Block alarm"><OffAlertIcon /></Tool>
        <Tool label="Unblock alarm"><GrayAlertIcon /></Tool>
        <Tool label="Blocked alarms"><YellowAlertIcon /></Tool>
        <Sep />
        <Tool label="Silence"><CrossedIcon /></Tool>
        <Sep />
        <Tool label="Comment"><SheetIcon mark="M4 9h4l1 2h4M11 9l3 4" /></Tool>
        <Tool label="Attach"><SheetIcon mark="M6 8h6v6H6zM9 5v3" /></Tool>
        <Tool label="Note"><SheetIcon mark="M4 12l4-5h4l-3 5z" /></Tool>
        <Tool label="Remove note"><SheetIcon mark="M5 8l4 4M9 8l-4 4" /></Tool>
        <Tool label="Trend"><SheetIcon mark="M4 1v12h10M12 11l2 2-2 2M2 3l2-2 2 2" /></Tool>
      </div>
      <table className="w-full table-fixed border-b border-[#cbc7b8] bg-[#ebeadb]">
        <thead>
          <tr className="h-[19px]">
            {columns.map(([name, width]) => (
              <th key={name} scope="col" className={`${width} p-0 text-left font-normal whitespace-nowrap`}>
                <span className={`flex h-[15px] items-center border-r border-[#c7c5b2] ${name === "S.." ? "pl-2" : "pl-[10px]"}`}>
                  {name}
                  {name === "Object ID" && (
                    <svg width="9" height="5" viewBox="0 0 9 5" className="ml-[10px]" aria-hidden="true"><path d="M0 0h9L4.5 5z" fill="#aca899" /></svg>
                  )}
                </span>
              </th>
            ))}
            <td />
          </tr>
        </thead>
      </table>
    </section>
  )
}

export default function App() {
  return (
    <div className={`flex min-h-screen flex-col bg-[#aac6f3] text-[11px] leading-4 text-black ${ui}`}>
      <TitleBar />
      <div className="bg-linear-to-r from-[#a4bff0] to-[#c6daf9]">
        <MenuBar />
        <MainToolbar />
      </div>
      <div className="flex gap-1 bg-[#bbd0f6]">
        <FoldersPanel />
        <DocumentPane />
      </div>
      <div className="h-[3px] bg-[#8fb1ec]" />
      <AlarmsPanel />
      <footer>
        <div className="flex h-[19px] items-center border-t border-[#8c8a80] bg-[#ece9d8] pl-[6px]">
          <span>Ready</span>
          <span className="mr-[325px] ml-auto h-3 w-px bg-[#c7c5b2]" />
          <span className="mr-[27px] h-3 w-px bg-[#c7c5b2]" />
        </div>
        <div className="flex h-1 bg-[#2f80ea]">
          <span className="w-[95px] rounded-tr-sm bg-[#4fa552]" />
        </div>
      </footer>
    </div>
  )
}
